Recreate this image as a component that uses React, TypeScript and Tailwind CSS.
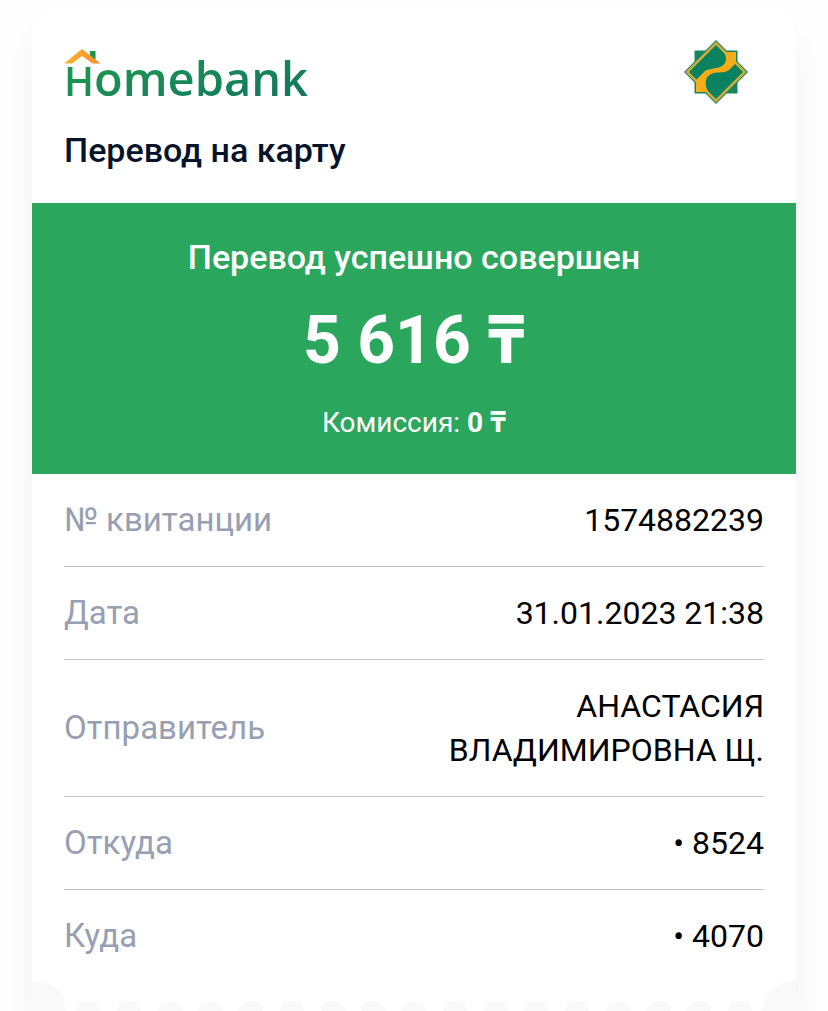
import React from 'react';

const DETAILS = [
  { label: '№ квитанции', value: '1574882239' },
  { label: 'Дата', value: '31.01.2023 21:38' },
  { label: 'Отправитель', value: 'АНАСТАСИЯ ВЛАДИМИРОВНА Щ.' },
  { label: 'Откуда', value: '• 8524' },
  { label: 'Куда', value: '• 4070' },
];

const HomebankLogo = () => (
  <div className="relative h-[60px]">
    <span className="block bg-linear-to-br from-[#1fa049] to-[#12705f] bg-clip-text font-['Open_Sans',sans-serif] text-[47px] leading-[60px] font-semibold text-transparent">
      <span className="text-[40px]">H</span>omebank
    </span>
    <svg className="absolute top-0 left-0" width="38" height="18" viewBox="0 0 38 18" aria-hidden="true">
      <defs>
        <linearGradient id="roof" x1="0" y1="0" x2="1" y2="0">
          <stop offset="0" stopColor="#fdb62f" />
          <stop offset="1" stopColor="#ef8e35" />
        </linearGradient>
      </defs>
      <path d="M26 3H31.500V12L26 8Z" fill="#23934c" />
      <path d="M0 15.500L18 1L36.500 15.500H28.500L18 8L8 15.500Z" fill="url(#roof)" />
    </svg>
  </div>
);

const HalykEmblem = () => (
  <svg width="64" height="64" viewBox="0 0 64 64" role="img" aria-label="Halyk">
    <rect x="10.500" y="10.500" width="43" height="43" fill="#168560" />
    <path d="M32 0L64 32L32 64L0 32Z" fill="#168560" />
    <path d="M41 12H52V23Z" fill="#f9ab18" />
    <path d="M23 52H12V41Z" fill="#f9ab18" />
    <path d="M32 1.500L62.500 32L32 62.500L1.500 32Z" fill="#d3ad35" />
    <path d="M40 11L52 23L32 52L22 52L11 41L32 12Z" fill="#f9ab18" />
    <path d="M5 32L32 5L40 13C43 17 43 23 38 26C33 29 26 28 21 31L12.500 39.500Z" fill="#0b825f" />
    <path d="M24 51C20 45 21 37 27 34C32 31 39 34 45 30L51 24L59 32L32 59Z" fill="#0b825f" />
  </svg>
);

const PerforatedEdge = () => (
  <div className="flex items-end" aria-hidden="true">
    <div className="h-[29px] w-[34px] rounded-tr-full bg-[#f9f9f9]" />
    <div className="flex flex-1 justify-between px-[10px]">
      {Array.from({ length: 17 }, (_, i) => (
        <div key={i} className="h-[10px] w-6 rounded-t-full bg-[#f9f9f9]" />
      ))}
    </div>
    <div className="h-[29px] w-[34px] rounded-tl-full bg-[#f9f9f9]" />
  </div>
);

const App = () => {
  return (
    <div className="overflow-hidden bg-[#fefefe] px-8 pt-3 font-[Roboto,'Noto_Sans',sans-serif] text-[32px] leading-[44px]">
      <main className="rounded-t-3xl bg-white shadow-[0_24px_32px_rgba(0,0,0,0.05)]">
        <header className="px-8 pt-7 pb-[31px]">
          <div className="flex items-start justify-between pr-4">
            <div className="pt-2">
              <HomebankLogo />
            </div>
            <HalykEmblem />
          </div>
          <h1 className="mt-5 text-[34px] font-medium text-[#06142b]">Перевод на карту</h1>
        </header>

        <section className="bg-[#2ba65d] px-8 py-8 text-center text-white">
          <h2 className="text-[34px] font-medium">Перевод успешно совершен</h2>
          <p className="mt-4 text-[66px] leading-[92px] font-bold">5 616 ₸</p>
          <p className="mt-4 text-[28px] leading-[39px]">
            Комиссия: <b>0 ₸</b>
          </p>
        </section>

        <dl className="px-8">
          {DETAILS.map(({ label, value }) => (
            <div
              key={label}
              className="flex items-center justify-between border-b border-[#c4c4c4] py-6 last:border-b-0"
            >
              <dt className="text-[33px] text-[#97a0b3]">{label}</dt>
              <dd className="max-w-1/2 text-right text-black">{value}</dd>
            </div>
          ))}
        </dl>

        <PerforatedEdge />
      </main>
    </div>
  );
};

export default App;
